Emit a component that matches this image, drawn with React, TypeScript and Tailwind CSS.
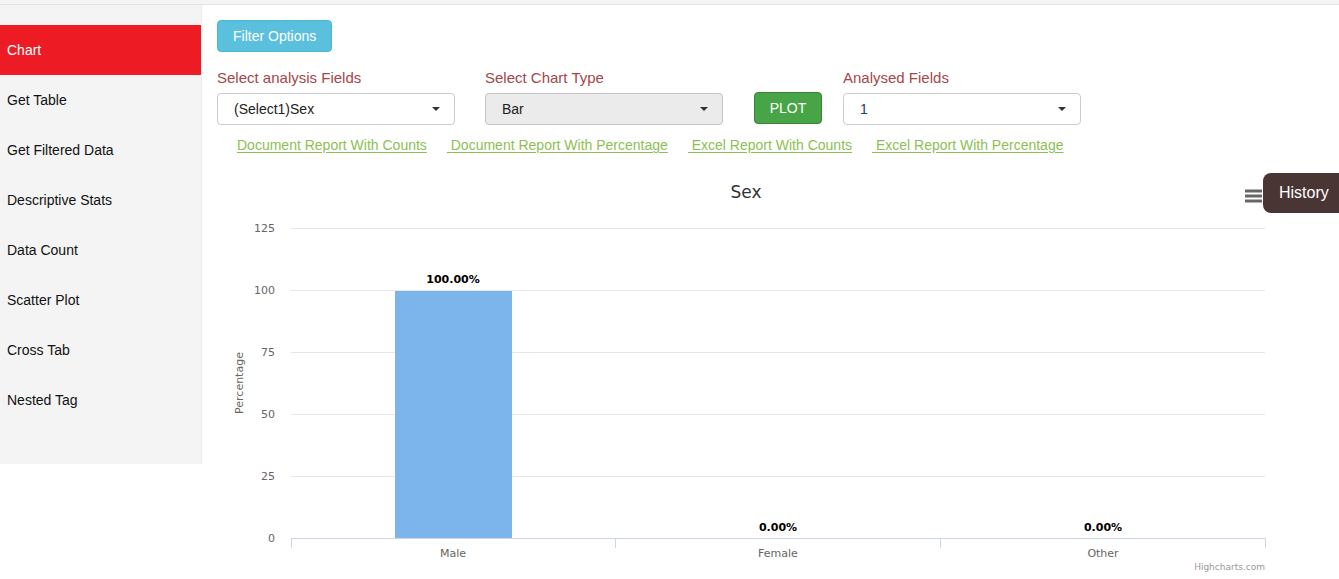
const MENU = [
  "Chart",
  "Get Table",
  "Get Filtered Data",
  "Descriptive Stats",
  "Data Count",
  "Scatter Plot",
  "Cross Tab",
  "Nested Tag",
];

const LINKS = [
  "Document Report With Counts",
  "\u00a0Document Report With Percentage",
  "\u00a0Excel Report With Counts",
  "\u00a0Excel Report With Percentage",
];

// y-axis ticks: value -> pixel row (page coords, svg uses matching viewBox)
const TICKS = [
  { v: 125, y: 228 },
  { v: 100, y: 290 },
  { v: 75, y: 352 },
  { v: 50, y: 414 },
  { v: 25, y: 476 },
  { v: 0, y: 538 },
];

const CATS = [
  { name: "Male", x: 453, value: "100.00%" },
  { name: "Female", x: 778, value: "0.00%" },
  { name: "Other", x: 1103, value: "0.00%" },
];

function Caret() {
  return <span className="w-0 h-0 border-l-[4px] border-r-[4px] border-t-[4px] border-l-transparent border-r-transparent border-t-[#333]" />;
}

function SelectBox({ value, disabled, valueColor }: { value: string; disabled?: boolean; valueColor?: string }) {
  return (
    <div
      className={`h-[32px] w-[238px] rounded-[4px] border flex items-center justify-between pl-[16px] pr-[14px] text-[14px] ${
        disabled ? "bg-[#ebebeb] border-[#c4c4c4]" : "bg-white border-[#cccccc]"
      }`}
    >
      <span className={valueColor ?? "text-[#222]"}>{value}</span>
      <Caret />
    </div>
  );
}

function BarChart() {
  const font = "'DejaVu Sans', Verdana, sans-serif";
  return (
    <svg width={1060} height={409} viewBox="217 170 1060 409" style={{ fontFamily: font }}>
      <text x={746} y={198} textAnchor="middle" fontSize={17} fill="#333">Sex</text>

      {/* context menu */}
      <g stroke="#666" strokeWidth={3}>
        <line x1={1245} y1={191} x2={1262} y2={191} />
        <line x1={1245} y1={196} x2={1262} y2={196} />
        <line x1={1245} y1={201} x2={1262} y2={201} />
      </g>

      {TICKS.slice(0, 5).map(t => (
        <line key={t.v} x1={291} y1={t.y + 0.5} x2={1265} y2={t.y + 0.5} stroke="#e6e6e6" />
      ))}
      {TICKS.map(t => (
        <text key={t.v} x={275} y={t.y + 4} textAnchor="end" fontSize={11} fill="#666">{t.v}</text>
      ))}

      <text x={243} y={383} textAnchor="middle" fontSize={11} fill="#666" transform="rotate(-90 243 383)">Percentage</text>

      <rect x={395} y={291} width={117} height={247} fill="#7cb5ec" />

      <line x1={291} y1={538.5} x2={1265} y2={538.5} stroke="#ccd6eb" />
      {[291, 615, 940, 1265].map(x => (
        <line key={x} x1={x + 0.5} y1={538} x2={x + 0.5} y2={548} stroke="#ccd6eb" />
      ))}

      {CATS.map((c, i) => (
        <g key={c.name}>
          <text x={c.x} y={557} textAnchor="middle" fontSize={11} fill="#666">{c.name}</text>
          <text
            x={c.x}
            y={i === 0 ? 283 : 531}
            textAnchor="middle"
            fontSize={11}
            fontWeight="bold"
            fill="#000"
            stroke="#fff"
            strokeWidth={2}
            paintOrder="stroke"
          >
            {c.value}
          </text>
        </g>
      ))}

      <text x={1265} y={570} textAnchor="end" fontSize={9} fill="#999">Highcharts.com</text>
    </svg>
  );
}

export default function App() {
  return (
    <div className="relative w-[1339px] h-[579px] overflow-hidden bg-white font-['Liberation_Sans',Arial,sans-serif]">
      <div className="h-[5px] bg-[#f4f4f4] border-b border-[#e4e4e4]" />

      <div className="flex items-start">
        {/* sidebar */}
        <aside className="w-[202px] h-[459px] bg-[#f4f4f4] border-r border-[#ebebeb] pt-[20px] shrink-0">
          {MENU.map((m, i) => (
            <div
              key={m}
              className={`h-[50px] flex items-center pl-[7px] text-[14px] ${
                i === 0 ? "bg-[#ed1c24] text-white" : "text-[#111]"
              }`}
            >
              {m}
            </div>
          ))}
        </aside>

        {/* main */}
        <main className="flex-1 pl-[15px] pt-[15px]">
          <button className="h-[32px] px-[15px] rounded-[4px] bg-[#5bc0de] border border-[#46b8da] text-white text-[14px]">
            Filter Options
          </button>

          <div className="flex items-end mt-[17px]">
            <div className="flex flex-col gap-[6px]">
              <span className="text-[15px] text-[#a5474a] leading-[18px]">Select analysis Fields</span>
              <SelectBox value="(Select1)Sex" />
            </div>
            <div className="flex flex-col gap-[6px] ml-[30px]">
              <span className="text-[15px] text-[#a5474a] leading-[18px]">Select Chart Type</span>
              <SelectBox value="Bar" disabled />
            </div>
            <button className="ml-[31px] mb-[1px] h-[32px] w-[68px] rounded-[4px] bg-[#47a447] border border-[#398439] text-white text-[14px]">
              PLOT
            </button>
            <div className="flex flex-col gap-[6px] ml-[21px]">
              <span className="text-[15px] text-[#a5474a] leading-[18px]">Analysed Fields</span>
              <SelectBox value="1" valueColor="text-[#1d3c6e]" />
            </div>
          </div>

          <div className="flex gap-[20px] pl-[20px] mt-[11px] text-[14px] leading-[18px]">
            {LINKS.map(l => (
              <a key={l} className="text-[#8cc152] underline underline-offset-[2px] whitespace-pre cursor-pointer">
                {l}
              </a>
            ))}
          </div>

          <div className="mt-[16px]">
            <BarChart />
          </div>
        </main>
      </div>

      <div className="absolute right-0 top-[173px] h-[40px] w-[76px] rounded-l-[8px] bg-[#4a3535] text-white text-[16px] flex items-center pl-[16px]">
        History
      </div>
    </div>
  );
}
